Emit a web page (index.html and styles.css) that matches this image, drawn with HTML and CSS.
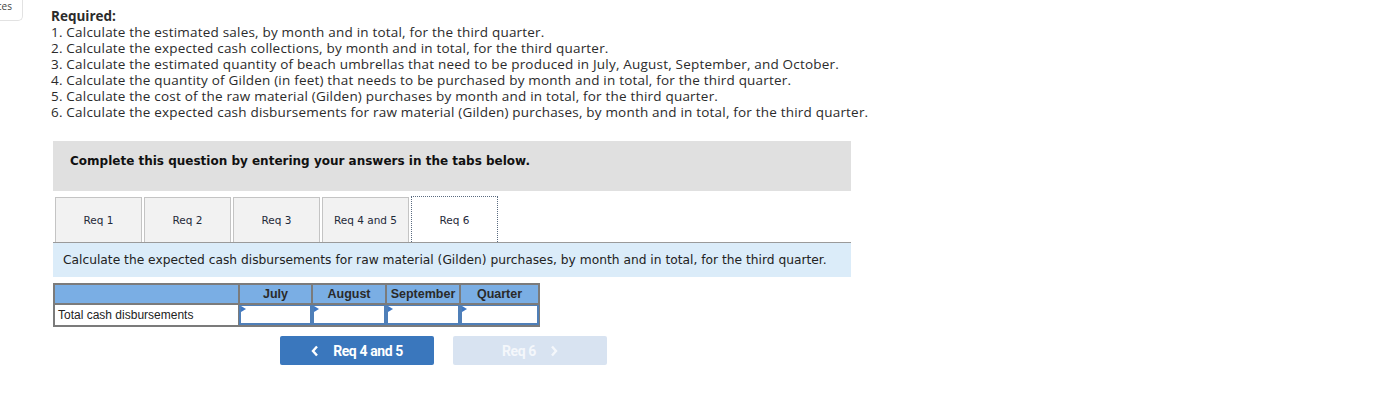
FILE: index.html
```html
<!DOCTYPE html>
<html>
<head>
<meta charset="utf-8">
<link rel="stylesheet" href="styles.css">
</head>
<body>
<div class="page">
  <div class="corner"><span>ces</span></div>
  <div class="main">
    <div class="required">
      <div class="req-title">Required:</div>
      <div>1. Calculate the estimated sales, by month and in total, for the third quarter.</div>
      <div>2. Calculate the expected cash collections, by month and in total, for the third quarter.</div>
      <div>3. Calculate the estimated quantity of beach umbrellas that need to be produced in July, August, September, and October.</div>
      <div>4. Calculate the quantity of Gilden (in feet) that needs to be purchased by month and in total, for the third quarter.</div>
      <div>5. Calculate the cost of the raw material (Gilden) purchases by month and in total, for the third quarter.</div>
      <div>6. Calculate the expected cash disbursements for raw material (Gilden) purchases, by month and in total, for the third quarter.</div>
    </div>
    <div class="question">
      <div class="complete">Complete this question by entering your answers in the tabs below.</div>
      <div class="tabs">
        <div class="tab">Req 1</div>
        <div class="tab">Req 2</div>
        <div class="tab">Req 3</div>
        <div class="tab">Req 4 and 5</div>
        <div class="tab active">Req 6</div>
      </div>
      <div class="instr">Calculate the expected cash disbursements for raw material (Gilden) purchases, by month and in total, for the third quarter.</div>
      <table class="grid">
        <colgroup>
          <col class="c0"><col class="c1"><col class="c2"><col class="c3"><col class="c4">
        </colgroup>
        <tr class="head">
          <th></th>
          <th>July</th>
          <th>August</th>
          <th>September</th>
          <th>Quarter</th>
        </tr>
        <tr>
          <td class="label">Total cash disbursements</td>
          <td class="cell"><div class="inp"><span class="tri"></span></div></td>
          <td class="cell"><div class="inp"><span class="tri"></span></div></td>
          <td class="cell"><div class="inp"><span class="tri"></span></div></td>
          <td class="cell"><div class="inp"><span class="tri"></span></div></td>
        </tr>
      </table>
      <div class="nav">
        <div class="btn prev"><svg class="chev left" width="8" height="12" viewBox="0 0 8 12"><polyline points="6,1.5 2,6 6,10.5" fill="none" stroke="currentColor" stroke-width="2.4"/></svg>Req 4 and 5</div>
        <div class="btn next disabled">Req 6<svg class="chev right" width="8" height="12" viewBox="0 0 8 12"><polyline points="2,1.5 6,6 2,10.5" fill="none" stroke="currentColor" stroke-width="2.4"/></svg></div>
      </div>
    </div>
  </div>
</div>
</body>
</html>
```

FILE: styles.css
```css
html, body {
  margin: 0;
  padding: 0;
  background: #ffffff;
}
.page {
  display: flex;
  align-items: flex-start;
}
.corner {
  width: 22px;
  height: 20px;
  border-right: 1px solid #e2e2e2;
  border-bottom: 1px solid #e2e2e2;
  border-bottom-right-radius: 5px;
  overflow: hidden;
  display: flex;
  justify-content: flex-end;
  font-family: "Open Sans", "Liberation Sans", sans-serif;
  font-size: 10px;
  line-height: 12px;
  color: #444;
  flex: none;
}
.corner span {
  margin-top: 0;
  margin-right: 10px;
}
.main {
  margin-left: 28px;
  padding-top: 8px;
}
.required {
  font-family: "Open Sans", "Liberation Sans", sans-serif;
  font-size: 13.5px;
  letter-spacing: 0.2px;
  line-height: 16px;
  color: #2b2b2b;
}
.req-title {
  font-weight: bold;
  letter-spacing: 0;
}
.question {
  margin-left: 2px;
  margin-top: 21px;
  width: 798px;
}
.complete {
  background: #e0e0e0;
  height: 50px;
  box-sizing: border-box;
  padding-top: 12px;
  padding-left: 17px;
  font-family: "DejaVu Sans", Verdana, sans-serif;
  font-weight: bold;
  font-size: 12px;
  line-height: 16px;
  color: #111;
}
.tabs {
  margin-top: 6px;
  display: flex;
  padding-left: 2px;
  border-bottom: 1px solid #9a9a9a;
  height: 45px;
}
.tab {
  width: 85px;
  height: 44px;
  margin-right: 2px;
  background: #f2f2f2;
  border: 1px solid #c4c4c4;
  border-bottom: none;
  display: flex;
  align-items: center;
  justify-content: center;
  font-family: "DejaVu Sans", Verdana, sans-serif;
  font-size: 10.5px;
  color: #1f2a3a;
}
.tab.active {
  background: #ffffff;
  border: 1px dotted #5a6b80;
  border-bottom: none;
  height: 45px;
  margin-bottom: -1px;
  margin-top: -1px;
}
.instr {
  background: #dbecf9;
  height: 34px;
  display: flex;
  align-items: center;
  padding-left: 10px;
  font-family: "DejaVu Sans", Verdana, sans-serif;
  font-size: 12.25px;
  color: #222;
}
.grid {
  margin-top: 6px;
  border-collapse: collapse;
  table-layout: fixed;
  width: 485px;
  font-family: "Liberation Sans", Arial, sans-serif;
  font-size: 12px;
}
.grid .c0 { width: 185px; }
.grid .c1 { width: 73px; }
.grid .c2 { width: 74px; }
.grid .c3 { width: 74px; }
.grid .c4 { width: 79px; }
.grid th {
  background: #7aaee4;
  border: 2px solid #7b7b7b;
  height: 18px;
  padding: 0;
  color: #2a2a2a;
  font-weight: bold;
  font-size: 12.5px;
}
.grid td {
  border: 2px solid #7b7b7b;
  padding: 0;
  height: 20px;
}
.grid .label {
  padding-left: 3px;
  color: #222;
}
.grid .cell {
  background: #fff;
}
.inp {
  position: relative;
  height: 17px;
  border: 2px solid #4f7fb8;
  border-top: 1px solid #4f7fb8;
  margin: 0 -1px 0 -1px;
}
.tri {
  position: absolute;
  left: 0;
  top: 0;
  width: 0;
  height: 0;
  border-top: 3px solid transparent;
  border-bottom: 3px solid transparent;
  border-left: 5px solid #3f78c4;
}
.nav {
  margin-top: 9px;
  display: flex;
  gap: 19px;
  padding-left: 227px;
}
.btn {
  width: 154px;
  height: 29px;
  border-radius: 2px;
  display: flex;
  align-items: center;
  justify-content: center;
  font-family: "Roboto", "Liberation Sans", sans-serif;
  font-weight: bold;
  font-size: 14px;
  letter-spacing: -0.4px;
  color: #ffffff;
}
.btn.prev {
  background: #3a77bd;
}
.btn.next {
  background: #d8e3f1;
  color: #f4f7fb;
}
.chev {
  display: block;
  flex: none;
}
.chev.left { margin-right: 14px; }
.chev.right { margin-left: 14px; }
```
